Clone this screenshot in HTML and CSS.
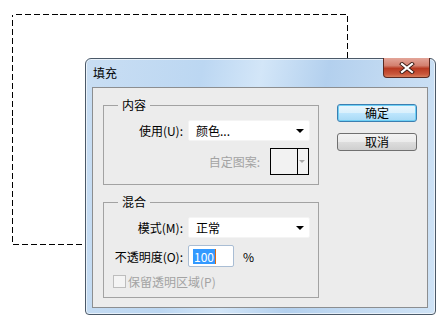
FILE: index.html
```html
<!DOCTYPE html>
<html lang="zh-CN">
<head>
    <meta charset="UTF-8">
    <title>填充</title>
    <link rel="stylesheet" href="styles.css">
</head>
<body>
    <svg class="marquee" width="437" height="317">
        <rect x="12.5" y="14.5" width="335" height="230" fill="none" stroke="#000" stroke-width="1" stroke-dasharray="6 3" stroke-dashoffset="-3" shape-rendering="crispEdges"></rect>
    </svg>

    <div class="dialog">
        <div class="titlebar">
            <span class="title">填充</span>
            <div class="close">
                <svg width="18" height="12" viewBox="0 0 18 12">
                    <path d="M4 2 L14 10 M14 2 L4 10" stroke="#3a1a14" stroke-width="4" stroke-linecap="square"></path>
                    <path d="M4 2 L14 10 M14 2 L4 10" stroke="#fff" stroke-width="2.2" stroke-linecap="square"></path>
                </svg>
            </div>
        </div>
        <div class="client">
            <div class="groups">
                <fieldset class="group first">
                    <legend>内容</legend>
                    <div class="row">
                        <label class="label">使用(<span class="key">U</span>):</label>
                        <div class="select">颜色...<span class="arrow"></span></div>
                    </div>
                    <div class="row pattern-row">
                        <span class="label-gray">自定图案:</span>
                        <div class="pattern">
                            <div class="swatch"></div>
                            <div class="pattern-arrow"><span class="arrow gray"></span></div>
                        </div>
                    </div>
                </fieldset>
                <fieldset class="group second">
                    <legend>混合</legend>
                    <div class="row">
                        <label class="label">模式(<span class="key">M</span>):</label>
                        <div class="select">正常<span class="arrow"></span></div>
                    </div>
                    <div class="row">
                        <label class="label">不透明度(<span class="key">O</span>):</label>
                        <div class="input"><span class="selected">100</span><span class="caret"></span></div>
                        <span class="percent">%</span>
                    </div>
                    <div class="row check-row">
                        <span class="checkbox"></span>
                        <span class="label-gray">保留透明区域(P)</span>
                    </div>
                </fieldset>
            </div>
            <div class="buttons">
                <button class="btn default">确定</button>
                <button class="btn">取消</button>
            </div>
        </div>
    </div>
</body>
</html>
```

FILE: styles.css
```css
* {
    margin: 0px;
    padding: 0px;
    box-sizing: border-box;
}
body {
    width: 437px;
    height: 317px;
    background-color: white;
    font-family: "Noto Sans CJK SC", "Liberation Sans", sans-serif;
    font-size: 12px;
    color: #000;
    overflow: hidden;
}
.marquee {
    position: absolute;
    left: 0px;
    top: 0px;
}
.dialog {
    position: absolute;
    left: 85px;
    top: 58px;
    width: 351px;
    height: 257px;
    border: 1px solid #4b5968;
    border-radius: 6px 6px 4px 4px;
    background: linear-gradient(100deg, #c9def3 0%, #bcd7f2 30%, #d3e6f8 45%, #b3d0ee 62%, #c4dbf2 80%, #cfe3f6 100%);
    box-shadow: inset 0 0 0 1px rgba(255,255,255,0.6);
    display: flex;
    flex-direction: column;
    padding: 0px 7px 6px 6px;
}
.titlebar {
    height: 28px;
    display: flex;
    align-items: center;
    padding: 0px 0px 1px 1px;
}
.title {
    line-height: 16px;
}
.close {
    position: absolute;
    top: -1px;
    right: 5px;
    width: 47px;
    height: 20px;
    border: 1px solid #5a2a22;
    border-top: none;
    border-radius: 0px 0px 4px 4px;
    background: linear-gradient(#e3a599 0%, #d3806f 40%, #b83a22 55%, #c9573c 85%, #d77e5c 100%);
    display: flex;
    align-items: center;
    justify-content: center;
}
.client {
    flex: 1;
    border: 1px solid #8c8e90;
    background-color: #ececec;
    display: flex;
    padding: 9px 10px 0px 10px;
}
.groups {
    width: 216px;
}
.group {
    border: 1px solid #a2a2a2;
    min-width: 0px;
    padding: 0px 0px 9px 0px;
}
.group.second {
    margin-top: 9px;
    padding-bottom: 7px;
}
legend {
    margin-left: 14px;
    padding: 0px 4px;
    line-height: 16px;
}
.row {
    display: flex;
    align-items: center;
    margin-top: 7px;
}
.label {
    width: 79px;
    text-align: right;
    margin-right: 5px;
    white-space: nowrap;
}
.key {
    color: #000;
}
.label-gray {
    color: #a3a3a3;
}
.select {
    width: 122px;
    height: 21px;
    background-color: white;
    border: 1px solid #f4f4f4;
    border-radius: 2px;
    padding-left: 7px;
    display: flex;
    align-items: center;
    position: relative;
}
.arrow {
    position: absolute;
    right: 5px;
    top: 8px;
    width: 0px;
    height: 0px;
    border-left: 4px solid transparent;
    border-right: 4px solid transparent;
    border-top: 4px solid #000;
}
.arrow.gray {
    border-left-width: 3px;
    border-right-width: 3px;
    border-top: 3px solid #a8a8a8;
    right: 3px;
    top: 11px;
}
.pattern-row {
    justify-content: flex-end;
    padding-right: 9px;
    gap: 10px;
}
.pattern {
    width: 39px;
    height: 27px;
    border: 1px solid #000;
    background-color: #f2f2f2;
    display: flex;
}
.swatch {
    width: 27px;
    border-right: 1px solid #000;
}
.pattern-arrow {
    flex: 1;
    position: relative;
}
.input {
    width: 46px;
    height: 22px;
    background-color: white;
    border: 1px solid #a9bdd4;
    border-radius: 2px;
    padding-left: 4px;
    display: flex;
    align-items: center;
}
.selected {
    background-color: #3399ff;
    color: white;
    line-height: 15px;
    padding: 0px 1px;
}
.caret {
    width: 1px;
    height: 15px;
    background-color: #e06a10;
}
.percent {
    margin-left: 9px;
}
.check-row {
    margin-left: 9px;
    gap: 2px;
    margin-top: 6px;
}
.checkbox {
    width: 13px;
    height: 13px;
    border: 1px solid #bdbdbd;
    background-color: #f4f4f4;
}
.buttons {
    margin-left: 18px;
    margin-top: 7px;
    display: flex;
    flex-direction: column;
    gap: 11px;
}
.btn {
    width: 80px;
    height: 18px;
    font-family: "Noto Sans CJK SC", "Liberation Sans", sans-serif;
    font-size: 12px;
    line-height: 14px;
    color: #000;
    border: 1px solid #707070;
    border-radius: 3px;
    background: linear-gradient(#f3f3f3 0%, #ebebeb 50%, #dddddd 51%, #cfcfcf 100%);
}
.btn.default {
    border-color: #3c7fb1;
    background: linear-gradient(#eaf6fd 0%, #d9f0fc 50%, #bee6fd 51%, #a7d9f5 100%);
    box-shadow: inset 0 0 0 1px #6fd0f5;
}
```
